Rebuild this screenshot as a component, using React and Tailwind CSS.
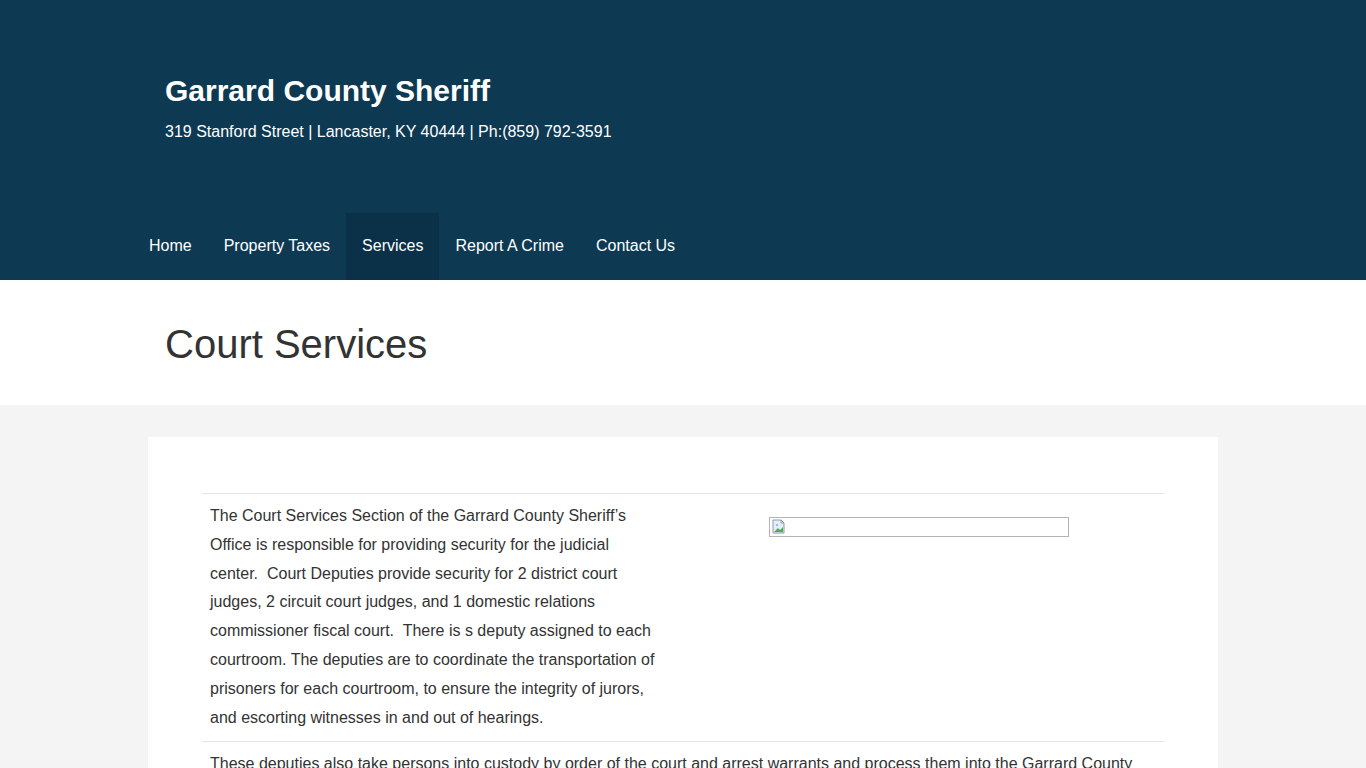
const navItems = ['Home', 'Property Taxes', 'Services', 'Report A Crime', 'Contact Us'];

const BrokenImage = () => (
  <svg width="16" height="16" viewBox="0 0 16 16" className="ml-[1px] mt-[1px]">
    <path d="M2 1h8l3 3v10H2z" fill="#e8eef7" stroke="#8a9bb0" strokeWidth="1" />
    <path d="M10 1v3h3" fill="none" stroke="#8a9bb0" strokeWidth="1" />
    <path d="M3 13l4-4 2 2 3-3v5z" fill="#4caf50" />
    <circle cx="6" cy="6" r="1.3" fill="#9fc3e8" />
  </svg>
);

export default function App() {
  return (
    <div className="min-h-screen bg-[#f4f4f4] text-[#333] font-['Liberation_Sans',Arial,sans-serif]">
      <header className="bg-[#0e3953] text-white">
        <div className="mx-auto w-[1070px]">
          <div className="px-[17px] pt-[73px]">
            <h1 className="text-[30px] font-bold leading-[36px]">Garrard County Sheriff</h1>
            <p className="mt-[11px] text-[16px] leading-[24px]">319 Stanford Street | Lancaster, KY 40444 | Ph:(859) 792-3591</p>
          </div>
          <nav className="ml-[-15px] mt-[69px] flex h-[67px]">
            {navItems.map((item) => (
              <a
                key={item}
                href="#"
                className={`flex items-center px-4 pb-[2px] text-[16px] ${item === 'Services' ? 'bg-[#0b3149]' : ''}`}
              >
                {item}
              </a>
            ))}
          </nav>
        </div>
      </header>

      <div className="bg-white">
        <div className="mx-auto w-[1070px] px-[17px] pt-[40px] pb-[37px]">
          <h2 className="text-[40px] leading-[48px] text-[#333]">Court Services</h2>
        </div>
      </div>

      <main className="pt-[32px]">
        <div className="mx-auto w-[1070px] bg-white px-[54px] pt-[56px] pb-10">
          <div className="border-t border-[#e6e6e6] text-[16px] leading-[28.8px]">
            <div className="flex border-b border-[#e6e6e6]">
              <div className="w-[470px] px-2 pt-2 pb-[9px] pr-[15px]">
                The Court Services Section of the Garrard County Sheriff’s Office is responsible for providing security for the judicial center.&nbsp; Court Deputies provide security for 2 district court judges, 2 circuit court judges, and 1 domestic relations commissioner fiscal court.&nbsp; There is s deputy assigned to each courtroom. The deputies are to coordinate the transportation of prisoners for each courtroom, to ensure the integrity of jurors, and escorting witnesses in and out of hearings.
              </div>
              <div className="flex flex-1 justify-center p-2 pl-[10px]">
                <div className="mt-[15px] h-[20px] w-[300px] border border-[#b4b4b4]">
                  <BrokenImage />
                </div>
              </div>
            </div>
            <div className="p-2">
              These deputies also take persons into custody by order of the court and arrest warrants and process them into the Garrard County Detention Center. Deputies also serve civil process, summonses, subpoenas and other court papers issued by the courts.
            </div>
          </div>
        </div>
      </main>
    </div>
  );
}
